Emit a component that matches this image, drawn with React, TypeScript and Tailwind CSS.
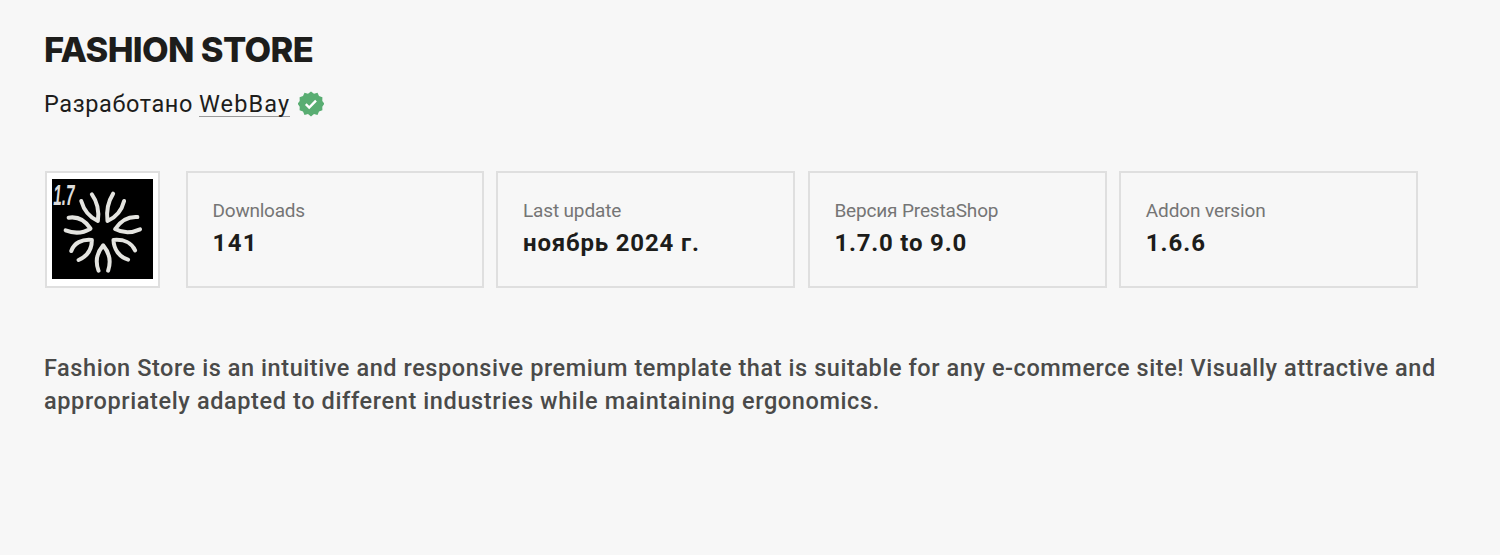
const stats = [
  { label: "Downloads", value: "141", labelCls: "tracking-[-0.25px]", valueCls: "tracking-[1.3px]" },
  { label: "Last update", value: "ноябрь 2024 г.", labelCls: "tracking-[-0.15px]", valueCls: "tracking-[0.85px]" },
  { label: "Версия PrestaShop", value: "1.7.0 to 9.0", labelCls: "tracking-[-0.15px]", valueCls: "tracking-[0.8px]" },
  { label: "Addon version", value: "1.6.6", labelCls: "tracking-[-0.1px]", valueCls: "tracking-[1px]" },
];

const petals = [
  "M168 98C184 120 190 150 186 178C164 168 144 146 136 118",
  "M232 96C217 120 211 148 215 178C238 168 258 146 265 118",
  "M98 168C124 164 148 176 164 201C142 214 114 216 89 206",
  "M305 166C276 164 254 178 238 202C262 215 288 214 313 203",
  "M106 268C114 244 138 232 168 235C168 262 154 284 128 295",
  "M298 266C288 244 264 232 233 235C234 262 250 286 277 294",
  "M188 327C178 300 184 272 202 251C220 272 226 300 217 327",
];

function Logo() {
  return (
    <svg viewBox="48 52 304 300" preserveAspectRatio="none" className="h-full w-full bg-black">
      <g fill="none" stroke="#e4e4e0" strokeWidth="12" strokeLinecap="round" strokeLinejoin="round">
        {petals.map((d) => (
          <path key={d} d={d} />
        ))}
      </g>
      <text
        x="52"
        y="130"
        fill="#dcdcdc"
        fontSize="88"
        fontStyle="italic"
        fontWeight="bold"
        textLength="64"
        lengthAdjust="spacingAndGlyphs"
        className="font-['Liberation_Sans',sans-serif]"
      >
        1.7
      </text>
    </svg>
  );
}

function VerifiedBadge() {
  return (
    <svg viewBox="0 0 26 26" className="h-[26px] w-[26px]">
      <path
        d="M13 .5l3 2.3 3.5-1 1.5 3.3 3.4 1.2-.1 3.6 2 2.9-2 3 .1 3.5-3.4 1.3-1.5 3.3-3.5-.9-3 2.4-3-2.4-3.5.9L5 20.6l-3.4-1.3.1-3.5-2-3 2-2.9-.1-3.6L5 5.1l1.5-3.3 3.5 1z"
        fill="#59ad72"
      />
      <path d="M7.8 13.2l3.4 3.4 6.8-7" fill="none" stroke="#fff" strokeWidth="2.4" />
    </svg>
  );
}

export default function App() {
  return (
    <main className="h-[555px] w-full bg-[#f7f7f7] px-11 pt-[29px] font-['Roboto','Noto_Sans',sans-serif] text-[#1d1d1b]">
      <h1 className="h-[42px] font-['Inter',sans-serif] text-[34.5px] leading-[42px] font-extrabold tracking-[-0.65px] whitespace-nowrap">
        FASHION STORE
      </h1>

      <div className="mt-[17px] flex h-8 items-center text-[23.5px] leading-8 whitespace-nowrap">
        <span className="tracking-[0.6px]">Разработано</span>
        <a href="#" className="ml-1.5 h-[26px] border-b border-[#999] leading-[26px] tracking-[1.1px]">
          WebBay
        </a>
        <span className="ml-2">
          <VerifiedBadge />
        </span>
      </div>

      <section className="mt-[51px] flex">
        <div className="ml-px h-[117px] w-[115px] shrink-0 border-2 border-[#dfdfdf] bg-white px-[5px] pt-1.5 pb-[7px]">
          <Logo />
        </div>
        <div className="ml-[26px] grid grid-cols-[298px_299px_299px_299px] gap-[12.4px]">
          {stats.map(({ label, value, labelCls, valueCls }) => (
            <div key={label} className="h-[117px] border-2 border-[#dfdfdf] pt-6 pl-[24.6px] whitespace-nowrap">
              <p className={`text-[19px] leading-7 text-[#757575] ${labelCls}`}>{label}</p>
              <p className={`mt-0.5 text-[24px] leading-8 font-bold ${valueCls}`}>{value}</p>
            </div>
          ))}
        </div>
      </section>

      <p className="mt-16 text-[23.5px] leading-[33px] font-medium text-[#4a4a49] whitespace-nowrap">
        <span className="tracking-[0.565px]">
          Fashion Store is an intuitive and responsive premium template that is suitable for any e-commerce site! Visually attractive and
        </span>
        <br />
        <span className="tracking-[0.61px]">
          appropriately adapted to different industries while maintaining ergonomics.
        </span>
      </p>
    </main>
  );
}
